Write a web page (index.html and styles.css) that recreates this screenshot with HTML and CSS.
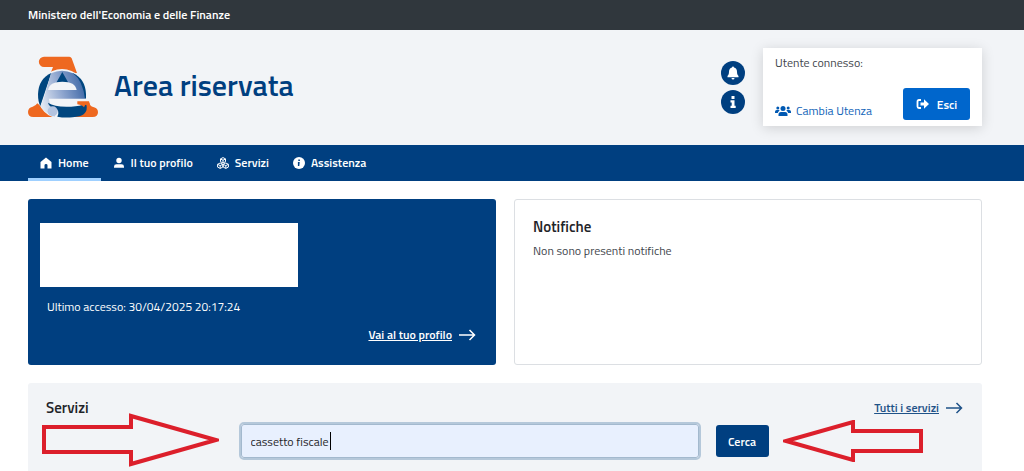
FILE: index.html
```html
<!DOCTYPE html>
<html lang="it">
<head>
    <meta charset="UTF-8" />
    <meta name="viewport" content="width=device-width, initial-scale=1" />
    <title>Area riservata</title>
    <link rel="stylesheet" href="styles.css">
</head>
<body>
<div class="topbar">Ministero dell'Economia e delle Finanze</div>

<header class="header">
    <svg class="logo" viewBox="24 24 210 186" aria-hidden="true">
        <defs>
            <linearGradient id="fade" x1="0" y1="0.6" x2="1" y2="0.3">
                <stop offset="0" stop-color="#dfe6f2" />
                <stop offset="0.5" stop-color="#8ba3cd" />
                <stop offset="1" stop-color="#3c66a5" />
            </linearGradient>
        </defs>
        <path fill="#ee6820" d="M72 26h76q5 0 7 5l16 44H92l7-18H72a14 14 0 0 1 0-31z" />
        <path fill="#ee6820" d="M52 166l48 41H40q-16 0-16-15 0-13 14-16 9-2 14-10zM190 162h16l5 10q3 5 11 6 12 3 12 15 0 14-16 14h-58z" />
        <circle cx="126" cy="138" r="75" fill="#f2f4f7" />
        <path fill="#00467f" d="M94 75q-38 17-40 63 0 24 7 36z" />
        <path fill="#00467f" d="M158 75q38 17 40 63v14h-30z" />
        <path fill="url(#fade)" d="M93 76q33-16 66 0 30 22 36 78H89q-2 10 3 20l20 10-8 22q-33-12-42-32 10-20 31-98z" />
        <path fill="#00467f" d="M127 72l19 34h-38z" />
        <path fill="#f2f4f7" d="M84 126q4-25 43-25t43 25z" />
        <path fill="#f2f4f7" d="M86 152h114v12h-32q-18 9-42 9-20-3-36-10z" />
        <path fill="#00467f" d="M84 164q18 12 55 12 30 0 50-6h10q5 16-7 28-10 8-34 10-26 2-46-2 9-18-7-25-19-5-21-17z" />
        <path fill="#ee6820" d="M172 160h35l3 10h-14l-4 8q-5-7-20-9z" />
        <circle cx="98" cy="190" r="15" fill="#b4c4e0" />
    </svg>
    <h1 class="title">Area riservata</h1>
    <div class="quick">
        <button class="round" type="button" aria-label="Notifiche">
            <svg viewBox="0 0 24 24" width="24" height="24"><path fill="#fff" d="M12 5.500a1 1 0 0 1 1 1c2 .5 3 2 3 4.200 0 2.300.7 3.300 1.500 4.300v1.200h-11V15c.8-1 1.500-2 1.500-4.300 0-2.200 1-3.700 3-4.200a1 1 0 0 1 1-1zM10.500 17h3a1.500 1.500 0 0 1-3 0z" /></svg>
        </button>
        <button class="round" type="button" aria-label="Informazioni">
            <svg viewBox="0 0 24 24" width="24" height="24"><path fill="#fff" d="M10.500 6h3v3h-3zM9.500 10.200h4v5.500h1.200V18H9.500v-2.300h1.200v-3.200H9.500z" /></svg>
        </button>
    </div>
    <div class="user">
        <p class="user-label">Utente connesso:</p>
        <div class="user-row">
            <a class="switch" href="#">
                <svg viewBox="0 0 16 12" width="16" height="12" aria-hidden="true"><g fill="#0059b3"><circle cx="8" cy="3.500" r="2.500" /><circle cx="2.800" cy="3" r="1.500" /><circle cx="13.200" cy="3" r="1.500" /><path d="M3.500 11V9.500Q3.500 7 6 7h4q2.500 0 2.500 2.500V11zM0 8V6.800Q0 5 1.700 5h2q.7 0 1 .4Q3 6.500 2.800 8zM16 8V6.800Q16 5 14.300 5h-2q-.7 0-1 .4 1.700 1.100 1.900 2.600z" /></g></svg>
                Cambia Utenza
            </a>
            <button class="logout" type="button">
                <svg viewBox="0 0 14 12" width="14" height="12" aria-hidden="true"><path fill="none" stroke="#fff" stroke-width="1.800" d="M5 2H3Q1.500 2 1.500 3.500v5Q1.500 10 3 10h2" /><path fill="#fff" d="M4.500 4.500H8V1.300L13 6l-5 4.700V7.500H4.500z" /></svg>
                Esci
            </button>
        </div>
    </div>
</header>

<nav class="nav">
    <a class="nav-item active" href="#">
        <svg viewBox="0 0 12 12" width="12" height="12" aria-hidden="true"><path fill="#fff" d="M6 .5L11.500 5v6.500h-4V8.200q0-1.200-1.500-1.200T4.500 8.200v3.300h-4V5z" /></svg>
        Home
    </a>
    <a class="nav-item" href="#">
        <svg viewBox="0 0 12 12" width="12" height="12" aria-hidden="true"><circle cx="6" cy="3.500" r="2.700" fill="#fff" /><path fill="#fff" d="M1 10.800V9.500Q1 7.300 3.500 7.300h5q2.500 0 2.500 2.200v1.300z" /></svg>
        Il tuo profilo
    </a>
    <a class="nav-item" href="#">
        <svg viewBox="0 0 12 12" width="12" height="12" aria-hidden="true"><path fill="none" stroke="#fff" d="M6 .6l2.500 1.300v2.800L6 6 3.500 4.700V1.900zM3.200 6l2.600 1.300v2.800l-2.600 1.300L.6 10.100V7.300zM8.800 6l2.600 1.300v2.800l-2.600 1.300-2.600-1.300V7.300zM3.500 2L6 3.200 8.500 2M6 3.200V6M.6 7.300l2.600 1.300 2.600-1.300M3.200 8.600v2.800M6.200 7.300l2.600 1.300 2.600-1.300M8.800 8.600v2.800" /></svg>
        Servizi
    </a>
    <a class="nav-item" href="#">
        <svg viewBox="0 0 12 12" width="12" height="12" aria-hidden="true"><circle cx="6" cy="6" r="6" fill="#fff" /><path fill="#003f80" d="M5.300 2.500h1.600V4H5.300zM4.900 5h1.800L6.300 9H4.900z" /></svg>
        Assistenza
    </a>
</nav>

<main class="main">
    <div class="cards">
        <section class="profile">
            <div class="profile-name"></div>
            <p class="access">Ultimo accesso: 30/04/2025 20:17:24</p>
            <a class="more more-light" href="#">
                <span>Vai al tuo profilo</span>
                <svg viewBox="0 0 17 12" width="17" height="12" aria-hidden="true"><path fill="none" stroke="currentColor" stroke-width="1.500" d="M0 6h15.500M10.500 1l5 5-5 5" /></svg>
            </a>
        </section>
        <section class="notices">
            <h2 class="subtitle">Notifiche</h2>
            <p class="notices-text">Non sono presenti notifiche</p>
        </section>
    </div>

    <section class="services">
        <div class="services-head">
            <h2 class="subtitle">Servizi</h2>
            <a class="more" href="#">
                <span>Tutti i servizi</span>
                <svg viewBox="0 0 17 12" width="17" height="12" aria-hidden="true"><path fill="none" stroke="currentColor" stroke-width="1.500" d="M0 6h15.500M10.500 1l5 5-5 5" /></svg>
            </a>
        </div>
        <form class="search">
            <div class="field">
                <input class="search-input" type="text" aria-label="Cerca un servizio" value="cassetto fiscale" />
                <span class="caret"></span>
            </div>
            <button class="search-button" type="submit">Cerca</button>
        </form>
        <svg class="arrow arrow-left" viewBox="0 0 178 54" width="178" height="54" aria-hidden="true"><path d="M3 14h87V3l85 24-85 24V39H3z" /></svg>
        <svg class="arrow arrow-right" viewBox="0 0 140 42" width="140" height="42" aria-hidden="true"><path d="M138 11H70V2L3 21l67 19v-9h68z" /></svg>
    </section>
</main>
</body>
</html>
```

FILE: styles.css
```css
* {
    box-sizing: border-box;
}
body {
    margin: 0;
    min-height: 100vh;
    display: flex;
    flex-direction: column;
    font-family: "Titillium Web", Roboto, sans-serif;
    font-size: 12px;
    line-height: 18px;
    color: #3f464d;
    background: #fff;
}
h1, h2, p {
    margin: 0;
}
a {
    text-decoration: none;
}
svg {
    display: block;
    flex-shrink: 0;
}
button {
    border: none;
    padding: 0;
    font-family: inherit;
    font-size: 12px;
    font-weight: 600;
    color: #fff;
    cursor: pointer;
}
.topbar {
    padding: 6px 28px;
    background: #30373d;
    color: #fff;
    font-weight: 600;
}
.header {
    display: flex;
    align-items: center;
    padding: 18px 42px 19px 28px;
    background: #f2f4f7;
}
.logo {
    width: 70px;
    height: 62px;
}
.title {
    margin-left: 16px;
    margin-bottom: 4px;
    font-size: 30px;
    line-height: 36px;
    font-weight: 600;
    color: #003f80;
}
.quick {
    display: flex;
    flex-direction: column;
    gap: 5px;
    margin-left: auto;
    margin-right: 18px;
}
.round {
    width: 24px;
    height: 24px;
    border-radius: 50%;
    background: #003f80;
}
.user {
    width: 219px;
    padding: 6px 12px;
    background: #fff;
    box-shadow: 0 2px 12px rgba(0, 0, 0, 0.15);
}
.user-label {
    margin-bottom: 16px;
}
.user-row {
    display: flex;
    justify-content: space-between;
    align-items: center;
}
.switch {
    display: flex;
    align-items: center;
    gap: 5px;
    margin-top: 14px;
    color: #0f63b8;
}
.logout {
    display: flex;
    align-items: center;
    justify-content: center;
    gap: 7px;
    width: 67px;
    height: 32px;
    border-radius: 3px;
    background: #06c;
}
.nav {
    display: flex;
    padding: 0 28px;
    background: #003f80;
}
.nav-item {
    display: flex;
    align-items: center;
    gap: 6px;
    height: 36px;
    padding: 0 12px;
    border-top: 3px solid transparent;
    border-bottom: 3px solid transparent;
    color: #fff;
    font-weight: 600;
}
.nav-item.active {
    border-bottom-color: #9fd0ff;
}
.main {
    flex: 1;
    display: flex;
    flex-direction: column;
    gap: 18px;
    padding: 18px 42px 0 28px;
}
.cards {
    display: grid;
    grid-template-columns: 1fr 1fr;
    gap: 18px;
}
.profile {
    display: flex;
    flex-direction: column;
    padding: 24px 20px 21px 12px;
    border-radius: 3px;
    background: #003f80;
    color: #fff;
}
.profile-name {
    width: 258px;
    height: 64px;
    background: #fff;
}
.access {
    margin: 11px 7px 10px;
}
.more {
    display: flex;
    align-items: center;
    gap: 7px;
    color: #1f5288;
    font-weight: 600;
}
.more span {
    text-decoration: underline;
}
.more-light {
    align-self: flex-end;
    color: #fff;
}
.notices {
    padding: 18px;
    border: 1px solid #dcdfe3;
    border-radius: 3px;
}
.subtitle {
    font-size: 15px;
    line-height: 18px;
    font-weight: 600;
    color: #1f2429;
}
.notices-text {
    margin-top: 6px;
}
.services {
    position: relative;
    flex: 1;
    padding: 16px 19px 13px 18px;
    border-radius: 3px 3px 0 0;
    background: #f2f4f7;
}
.services-head {
    display: flex;
    justify-content: space-between;
}
.search {
    display: flex;
    justify-content: center;
    align-items: center;
    gap: 17px;
    margin-top: 7px;
}
.field {
    position: relative;
    flex: 0 1 458px;
}
.search-input {
    display: block;
    width: 100%;
    height: 34px;
    padding: 0 9px;
    border: 1px solid #a3b9ce;
    border-radius: 3px;
    outline: 2px solid #b5c8da;
    background: #e8f0fe;
    font-family: inherit;
    font-size: 12px;
    color: #1f2429;
}
.caret {
    position: absolute;
    left: 89px;
    top: 8px;
    width: 1px;
    height: 18px;
    background: #000;
}
.search-button {
    width: 53px;
    height: 32px;
    border-radius: 3px;
    background: #003f80;
}
/* frecce rosse che indicano la ricerca */
.arrow {
    position: absolute;
    fill: none;
    stroke: #dc1f2b;
    stroke-width: 4px;
}
.arrow-left {
    left: 13px;
    top: 30px;
}
.arrow-right {
    right: 59px;
    top: 37px;
}
```
